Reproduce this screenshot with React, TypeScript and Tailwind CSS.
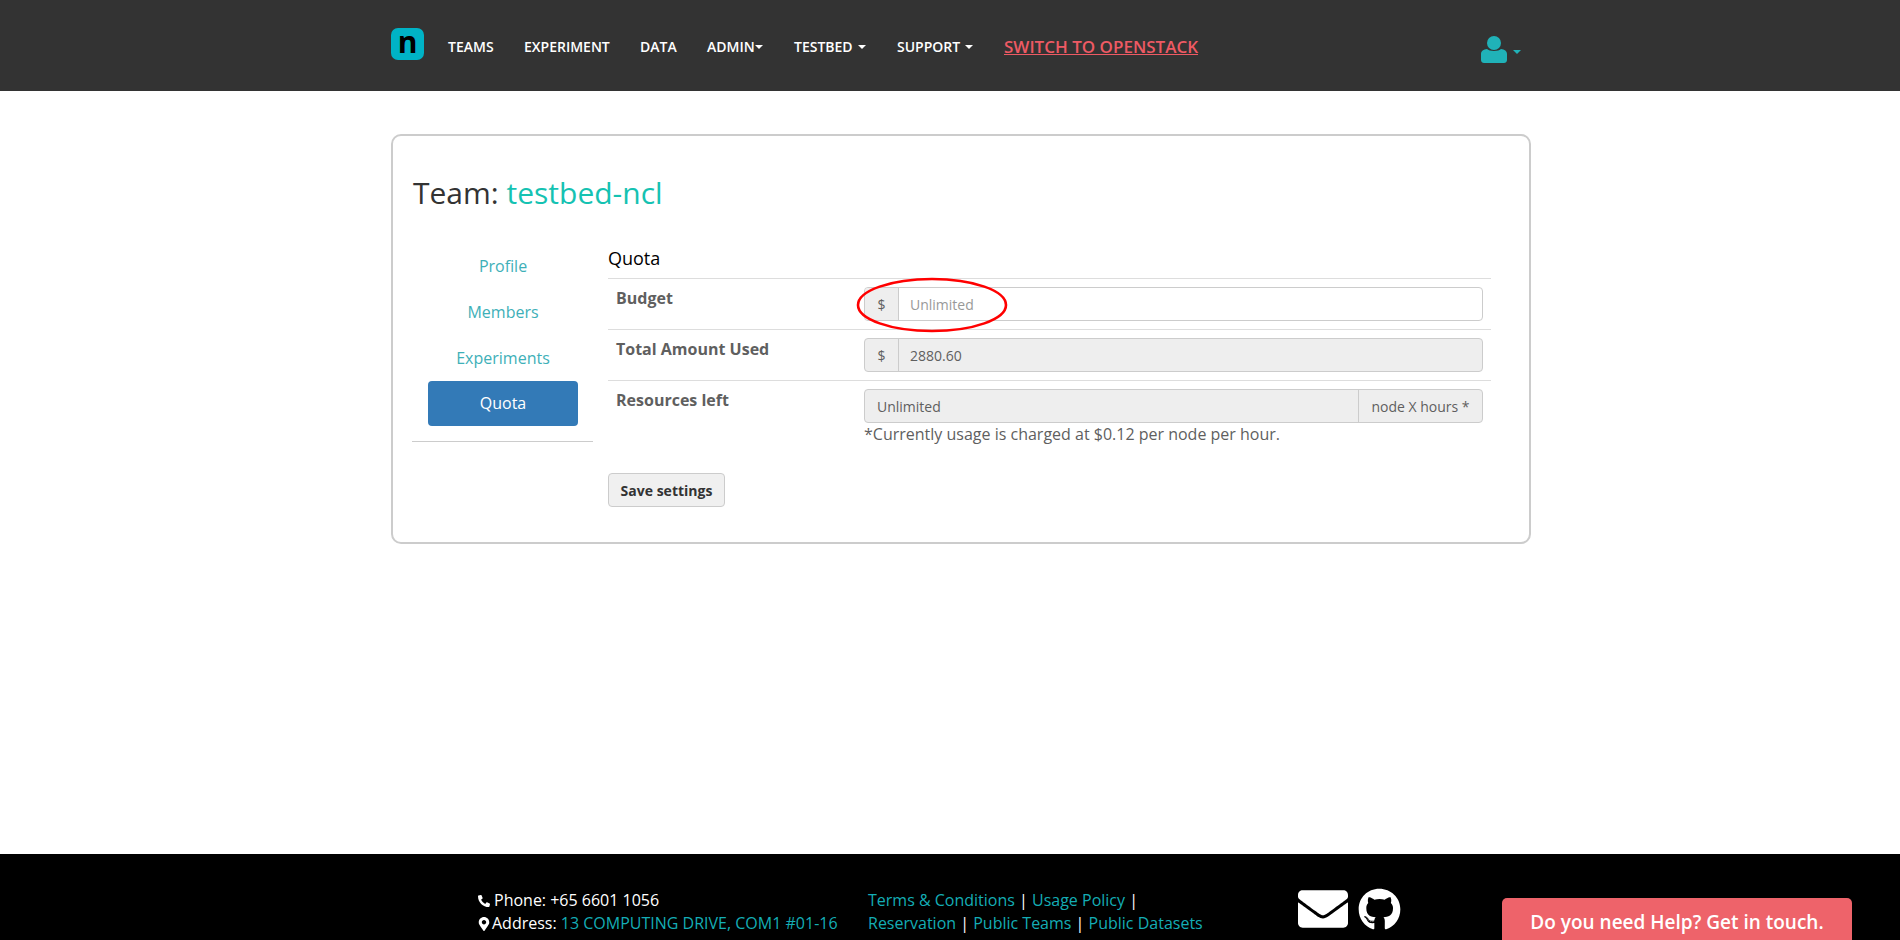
import { FaEnvelope, FaGithub, FaMapMarkerAlt, FaPhoneAlt } from "react-icons/fa";

const Caret = ({ color = "border-t-white" }: { color?: string }) => (
  <span className={`inline-block w-0 h-0 border-x-4 border-x-transparent border-t-4 ${color}`} />
);

function NavItem({ label, gap, width }: { label: string; gap?: string; width: string }) {
  return (
    <a className={`flex items-center text-[14px] font-semibold text-white uppercase mt-[2px] ${width}`}>
      <span>{label}</span>
      {gap !== undefined && <span className={`flex items-center ${gap}`}><Caret /></span>}
    </a>
  );
}

function Row({ label, children }: { label: string; children: React.ReactNode }) {
  return (
    <div className="flex border-t border-[#ddd] p-2">
      <div className="w-[248px] shrink-0 font-bold text-[16px] leading-[22px] text-[#5f5f5f]">{label}</div>
      <div className="flex-1">{children}</div>
    </div>
  );
}

export default function App() {
  return (
    <div className="h-screen overflow-hidden flex flex-col bg-white font-['Open_Sans',sans-serif]">
      <nav className="h-[91px] shrink-0 bg-[#333] flex items-center pl-[391px]">
        <div className="w-[33px] h-[32px] rounded-[7px] bg-[#00b3c6] flex items-center justify-center text-black font-bold text-[30px] leading-none pb-[5px] mr-[24px] -mt-[3px]">n</div>
        <NavItem label="Teams" width="w-[76px]" />
        <NavItem label="Experiment" width="w-[116px]" />
        <NavItem label="Data" width="w-[67px]" />
        <NavItem label="Admin" gap="ml-0" width="w-[87px]" />
        <NavItem label="Testbed" gap="ml-[5px]" width="w-[103px]" />
        <NavItem label="Support" gap="ml-[5px]" width="w-[107px]" />
        <a className="text-[17px] font-semibold uppercase underline text-[#ee5a64] mt-[2px]">Switch to OpenStack</a>
        <div className="ml-[283px] flex items-center mt-[7px]">
          <svg viewBox="0 0 26 27" className="w-[26px] h-[27px] fill-[#20b2b8]">
            <circle cx="13" cy="7" r="7" />
            <path d="M6 13 C8 15.5 18 15.5 20 13 C23.5 13.2 26 15 26 18 V24 C26 26 24.5 27 23 27 H3 C1.5 27 0 26 0 24 V18 C0 15 2.5 13.2 6 13 Z" />
          </svg>
          <span className="ml-[6px] mt-[5px] flex"><Caret color="border-t-[#20b2b8]" /></span>
        </div>
      </nav>

      <main className="flex-1 pt-[43px] pl-[391px]">
        <div className="w-[1140px] h-[410px] border-2 border-[#ccc] rounded-[10px] px-[19px]">
          <h2 className="mt-[38px] ml-[1px] text-[30px] leading-[38px] font-normal text-[#333]">
            Team: <span className="text-[#15c2b2]">testbed-ncl</span>
          </h2>
          <div className="flex mt-[30px]">
            <div className="w-[181px] shrink-0 mt-[2px]">
              <div className="border-b border-[#ccc] pb-[15px] pl-[16px] pr-[15px] text-center text-[16px] text-[#3eb0b8]">
                <a className="block h-[44px] leading-[44px]">Profile</a>
                <a className="block h-[44px] mt-[2px] leading-[44px]">Members</a>
                <a className="block h-[44px] mt-[2px] leading-[44px]">Experiments</a>
                <a className="block h-[45px] mt-[1px] leading-[45px] rounded bg-[#337ab7] text-white">Quota</a>
              </div>
            </div>
            <div className="ml-[15px] w-[883px]">
              <div className="h-[36px] pt-[4px] pb-0 text-[18px] leading-[24px] text-black">Quota</div>
              <Row label="Budget">
                <div className="relative flex h-[34px] text-[14px] border border-[#ccc] rounded">
                  <span className="w-[34px] shrink-0 flex items-center justify-center bg-[#eee] border-r border-[#ccc] text-[#5f5f5f] rounded-l">$</span>
                  <span className="flex-1 flex items-center pl-[11px] text-[#999]">Unlimited</span>
                  <svg viewBox="0 0 150 54" className="absolute left-[-8px] top-[-10px] w-[150px] h-[54px] overflow-visible pointer-events-none">
                    <ellipse cx="75" cy="27" rx="74" ry="26" fill="none" stroke="#f00" strokeWidth="2.6" />
                  </svg>
                </div>
              </Row>
              <Row label="Total Amount Used">
                <div className="flex h-[34px] text-[14px] border border-[#ccc] rounded bg-[#eee]">
                  <span className="w-[34px] shrink-0 flex items-center justify-center border-r border-[#ccc] text-[#5f5f5f]">$</span>
                  <span className="flex-1 flex items-center pl-[11px] text-[#5f5f5f]">2880.60</span>
                </div>
              </Row>
              <Row label="Resources left">
                <div className="flex h-[34px] text-[14px] border border-[#ccc] rounded bg-[#eee]">
                  <span className="flex-1 flex items-center pl-[12px] text-[#5f5f5f]">Unlimited</span>
                  <span className="w-[124px] shrink-0 flex items-center justify-center border-l border-[#ccc] text-[#5f5f5f]">node X hours *</span>
                </div>
                <p className="text-[16px] leading-[22px] text-[#5f5f5f]">*Currently usage is charged at $0.12 per node per hour.</p>
              </Row>
              <button className="mt-[20px] w-[117px] h-[34px] border border-[#ccc] rounded bg-[#f0f0f0] text-[14px] font-bold text-[#333]">Save settings</button>
            </div>
          </div>
        </div>
      </main>

      <footer className="h-[86px] shrink-0 bg-black flex pl-[478px] pt-[35px] text-[16px] leading-[23px] text-white overflow-hidden">
        <div className="w-[390px] shrink-0">
          <div className="flex items-center"><FaPhoneAlt className="w-[12px] h-[12px] mr-[4px]" />Phone: +65 6601 1056</div>
          <div className="flex items-center"><FaMapMarkerAlt className="w-[12px] h-[14px] mr-[2px]" />Address:&nbsp;<span className="text-[#14adb5]">13 COMPUTING DRIVE, COM1 #01-16</span></div>
        </div>
        <div className="w-[430px] shrink-0 text-[#14adb5]">
          <div>Terms &amp; Conditions <span className="text-white">|</span> Usage Policy <span className="text-white">|</span></div>
          <div>Reservation <span className="text-white">|</span> Public Teams <span className="text-white">|</span> Public Datasets</div>
        </div>
        <div className="flex shrink-0 -mt-[1px] h-[44px]">
          <FaEnvelope className="w-[50px] h-[50px] -mt-[4px]" />
          <FaGithub className="w-[43px] h-[43px] ml-[10px]" />
        </div>
        <button className="ml-[101px] mt-[9px] w-[350px] h-[60px] shrink-0 self-start rounded-t-[5px] bg-[#ee636a] text-white text-[19px] font-semibold pb-[12px]">Do you need Help? Get in touch.</button>
      </footer>
    </div>
  );
}
